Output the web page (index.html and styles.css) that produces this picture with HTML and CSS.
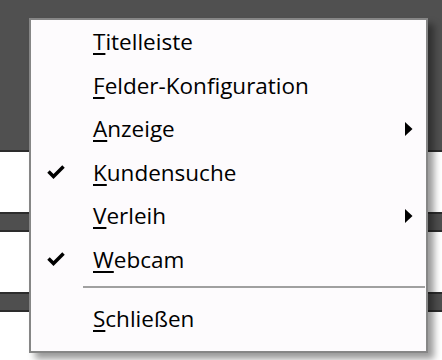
FILE: index.html
```html
<!DOCTYPE html>
<html lang="de">

<head>
    <meta charset="UTF-8">
    <title>Kontextmenü</title>
    <link rel="stylesheet" href="styles.css">
</head>

<body>
    <div class="screen">
        <div class="topbar"></div>
        <div class="row"></div>
        <div class="bar"></div>
        <div class="row"></div>
        <div class="bar"></div>
        <div class="row"></div>
    </div>

    <div class="menu">
        <div class="item">
            <span class="mark"></span>
            <span class="label"><u>T</u>itelleiste</span>
        </div>
        <div class="item">
            <span class="mark"></span>
            <span class="label"><u>F</u>elder-Konfiguration</span>
        </div>
        <div class="item">
            <span class="mark"></span>
            <span class="label"><u>A</u>nzeige</span>
            <svg class="sub" width="8" height="14" viewBox="0 0 8 14"><polygon points="0,0 7.5,7 0,14" /></svg>
        </div>
        <div class="item">
            <span class="mark">
                <svg width="18" height="14" viewBox="0 0 18 14"><path d="M1.5 6.5 L6.5 11.5 L16.5 1.5" /></svg>
            </span>
            <span class="label"><u>K</u>undensuche</span>
        </div>
        <div class="item">
            <span class="mark"></span>
            <span class="label"><u>V</u>erleih</span>
            <svg class="sub" width="8" height="14" viewBox="0 0 8 14"><polygon points="0,0 7.5,7 0,14" /></svg>
        </div>
        <div class="item">
            <span class="mark">
                <svg width="18" height="14" viewBox="0 0 18 14"><path d="M1.5 6.5 L6.5 11.5 L16.5 1.5" /></svg>
            </span>
            <span class="label"><u>W</u>ebcam</span>
        </div>
        <div class="separator"></div>
        <div class="item">
            <span class="mark"></span>
            <span class="label"><u>S</u>chließen</span>
        </div>
    </div>
</body>

</html>
```

FILE: styles.css
```css
body {
    margin: 0;
    width: 442px;
    height: 360px;
    overflow: hidden;
    background-color: #ffffff;
    font-family: 'Open Sans', 'Noto Sans', sans-serif;
}

/* Hintergrund (Fenster hinter dem Menü) */
.topbar {
    height: 150px;
    background-color: #505050;
    border-bottom: 2px solid #2d2d2d;
}

.row {
    height: 60px;
    background-color: #ffffff;
}

.bar {
    height: 16px;
    background-color: #4f4f4f;
    border-top: 2px solid #2d2d2d;
    border-bottom: 2px solid #2d2d2d;
}

/* Kontextmenü */
.menu {
    position: absolute;
    left: 29px;
    top: 18px;
    width: 399px;
    box-sizing: border-box;
    padding: 0 0 10px;
    background-color: #fdfbfd;
    border: 2px solid #868686;
    box-shadow: 6px 6px 7px rgba(0, 0, 0, 0.4);
}

.item {
    display: flex;
    align-items: center;
    height: 43.5px;
    font-size: 22.5px;
    color: #000000;
}

.mark {
    flex: none;
    width: 62px;
    box-sizing: border-box;
    padding-left: 16px;
    display: flex;
    align-items: center;
}

.mark svg path {
    fill: none;
    stroke: #000000;
    stroke-width: 3.5;
}

.label {
    flex: 1;
}

.label u {
    text-decoration-thickness: 2px;
    text-underline-offset: 3px;
}

.sub {
    flex: none;
    margin-right: 13px;
    fill: #000000;
}

.separator {
    height: 2px;
    margin: 5px 1px 9px 52px;
    background-color: #a0a0a0;
}
```
